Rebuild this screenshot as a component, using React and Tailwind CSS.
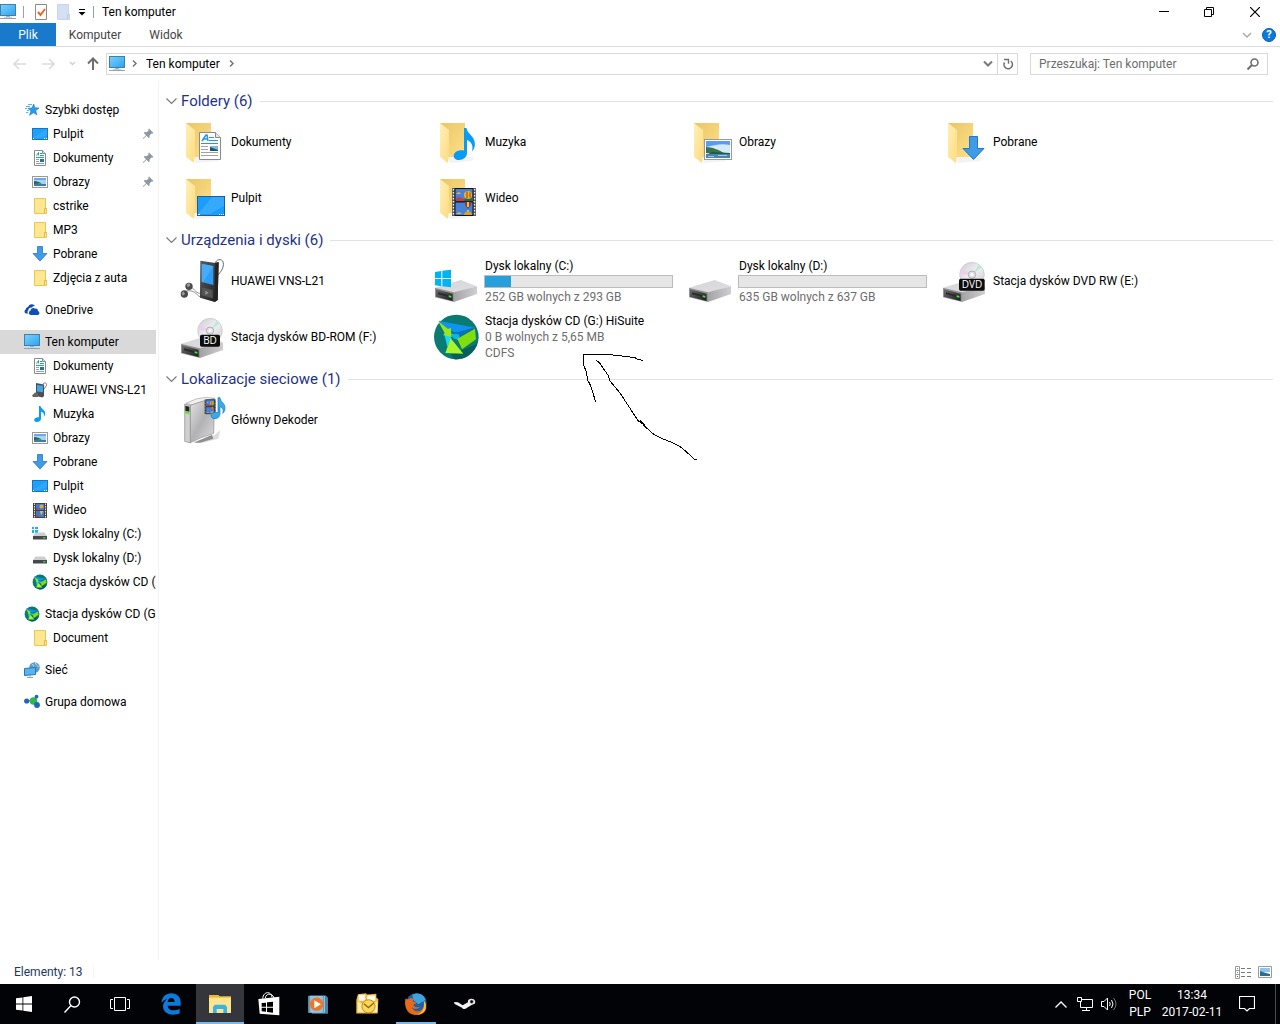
import React, { useState } from "react";

const SMALL = "h-4 w-4 shrink-0";
const LARGE = "h-12 w-12 shrink-0 overflow-visible";

/* ---------- small icons ---------- */

function PcIcon() {
  return (
    <svg viewBox="0 0 16 16" className={SMALL}>
      <defs>
        <linearGradient id="pc" x1="0" y1="0" x2="1" y2="1">
          <stop offset="0" stopColor="#79d2fb" />
          <stop offset="1" stopColor="#2da3f0" />
        </linearGradient>
      </defs>
      <rect x=".5" y=".5" width="15" height="11" fill="url(#pc)" stroke="#3f7fa8" />
      <path d="M6 12h4v1H6z" fill="#9bb3c4" />
      <path d="M4 13h8v1H4z" fill="#c3d3df" />
      <path d="M0 14h16v1H0z" fill="#8ea5b8" />
    </svg>
  );
}

function StarIcon() {
  return (
    <svg viewBox="0 0 16 16" className={SMALL}>
      <path d="M9.800 2l1 3.700 4.200.3-3.300 2.700 1.200 4.300-3.400-2.300-3.900 2.600 1.300-4.300L4 6.300l3.800-.3z" fill="#2a9ae8" stroke="#1a7fc8" strokeWidth=".6" />
      <path d="M4 2.500h4M2 4.500h4M1 6.500h2M3 8.500h2M2 10.500h2" stroke="#55b4f2" />
    </svg>
  );
}

function DesktopIcon() {
  return (
    <svg viewBox="0 0 16 16" className={SMALL}>
      <rect x=".5" y="2.500" width="15" height="11" fill="#1fa0fb" stroke="#1576bb" />
      <path d="M15 3v6L7 12H1z" fill="#3aaefe" opacity=".6" />
      <path d="M1 12.500h1M12 12.500h1M14 12.500h1" stroke="#fff" />
    </svg>
  );
}

function DocIcon() {
  return (
    <svg viewBox="0 0 16 16" className={SMALL}>
      <path d="M2.500.500h8l3 3v12h-11z" fill="#fff" stroke="#8a8a8a" />
      <path d="M10.500.500v3h3" fill="#ddd" stroke="#8a8a8a" />
      <path d="M4.500 5.500L6.500 2.500v3M8 3.500h2M8 5.500h4M4 7.500h8" fill="none" stroke="#2b95dc" />
      <path d="M4 9.500h3M4 11.500h3M4 13.500h8" stroke="#8ea4b4" />
      <path d="M8 9h4v3H8z" fill="#2d6d9d" />
    </svg>
  );
}

function PictureIcon() {
  return (
    <svg viewBox="0 0 16 16" className={SMALL}>
      <rect x=".5" y="2.500" width="15" height="11" fill="#fff" stroke="#999" />
      <path d="M2 4h12v8H2z" fill="#a6d3f8" />
      <path d="M2 4h12v2H2z" fill="#6aa9ec" />
      <path d="M2 7c3 0 5 1 8 2.500l-8 .5z" fill="#2c6349" />
      <path d="M2 10h12v2H2z" fill="#3c7ba4" />
    </svg>
  );
}

function FolderIcon() {
  return (
    <svg viewBox="0 0 16 16" className={SMALL}>
      <path d="M2.500.500h11v10h1v5h-12z" fill="#ffe693" stroke="#e9c64f" />
      <path d="M12.500 15v-4.500h2" fill="none" stroke="#e3b93c" />
    </svg>
  );
}

function DownloadIcon() {
  return (
    <svg viewBox="0 0 16 16" className={SMALL}>
      <path d="M5.500.500h5v7h4.500L8 15 1 7.500h4.500z" fill="#3d9be9" stroke="#2a78bd" strokeWidth=".8" />
    </svg>
  );
}

function CloudIcon() {
  return (
    <svg viewBox="0 0 16 16" className={SMALL}>
      <path d="M4.500 11.500H2A2.200 2.200 0 0 1 1.600 7.500 3 3 0 0 1 4 5a4 4 0 0 1 7.200-.8A3 3 0 0 0 8 5.600C5.500 5.400 4.300 7 4.400 8.500 3 9 3.500 11 4.500 11.500z" fill="#0f4fb5" />
      <path d="M7 13a2.300 2.300 0 0 1-.5-4.500 2.800 2.800 0 0 1 4.500-1.800 2.500 2.500 0 0 1 3 2.300A2.100 2.100 0 0 1 14 13z" fill="#0f4fb5" />
    </svg>
  );
}

function PlayerIcon() {
  return (
    <svg viewBox="0 0 16 16" className={SMALL}>
      <path d="M11 2c2-2 4-1 3.500 1.500L12 7" fill="none" stroke="#777" />
      <path d="M4 1l8 1.500V14l-1.500 1.500L4 14z" fill="#4b5054" />
      <path d="M5 3l6 .8v6.500L5 9.500z" fill="#3ea5ee" />
      <path d="M0 13.500l3-3 3 .5v4H1z" fill="#666" />
    </svg>
  );
}

function NoteIcon() {
  return (
    <svg viewBox="0 0 16 16" className={SMALL}>
      <path d="M7 0h1.500c.5 3 5 4 4.700 7.500-.1 1.500-.7 2.500-1.400 3.300.8-3-.6-4.500-2.800-5V13c-.2 2-2.200 3-4.300 3C3 16 2 15 2.200 13.800 2.500 12 4.800 10.800 7 11.300z" fill="#0a9bf5" />
    </svg>
  );
}

function FilmIcon() {
  return (
    <svg viewBox="0 0 16 16" className={SMALL}>
      <path d="M1 1h14v15H1z" fill="#444" />
      <path d="M2.500 1.500v14M13.500 1.500v14" stroke="#e4e4e4" strokeDasharray="1.500 1" />
      <path d="M4 2h8v6H4zM4 9h8v6H4z" fill="#3d78d4" />
      <circle cx="9.500" cy="4.500" r="2" fill="#e9a91f" />
      <path d="M8 9h3l-1 3-1 1z" fill="#e8c42a" />
      <path d="M4 6l3 1v1H4zM4 13l3 1v1H4z" fill="#c33c2d" />
    </svg>
  );
}

function SmallDriveIcon({ system }) {
  return (
    <svg viewBox="0 0 16 16" className={SMALL}>
      {system && <path d="M0 1h2v2H0zM3 1h3v2H3zM0 4h2v3H0zM3 4h3v3H3z" fill="#16b5f2" />}
      <path d="M3.500 6.500h9L15 10H1z" fill="#cfcfd1" />
      <path d="M1 10h14v3.500H1z" fill="#46494b" />
      <path d="M11 11.300h2.500v1H11z" fill="#4ee34e" />
    </svg>
  );
}

function HiSuiteArt() {
  return (
    <>
      <circle cx="67" cy="72" r="67" fill="#0b7a72" />
      <path d="M50 125l73-30 8-10a67 67 0 0 1-70 54z" fill="#07605e" />
      <path d="M13 23l111 21-50 18-38-14z" fill="#0c94f3" />
      <path d="M60 60l63-17-44 26z" fill="#0870c2" />
      <path d="M30 60l10 42 12-26-6-16z" fill="#13dcf6" />
      <path d="M50 62l24 2 6 20-22-8z" fill="#08b9e8" />
      <path d="M12 24l30 24 8-4 3 28-26-6 6-4z" fill="#9be518" />
      <path d="M123 47l3 32-42 30-14-32z" fill="#80dd0e" />
      <path d="M50 76L34 120l54 2z" fill="#aaf42c" />
    </>
  );
}

function HiSuiteIcon() {
  return (
    <svg viewBox="-5 0 144 144" className={SMALL}>
      <HiSuiteArt />
    </svg>
  );
}

function NetworkIcon() {
  return (
    <svg viewBox="0 0 16 16" className={SMALL}>
      <circle cx="10.500" cy="5.500" r="5.300" fill="#5a9dc9" />
      <path d="M8 2.500c1.500 0 2 1 1.500 2M11.500 1c0 2 2 2 3 4" fill="none" stroke="#c8e3ef" />
      <path d="M.500 6.500l11-1v7l-11 1z" fill="#53b5f4" stroke="#2e75a6" />
      <path d="M3 15.500h6M5 14h2" stroke="#8ba7ba" />
    </svg>
  );
}

function HomegroupIcon() {
  return (
    <svg viewBox="0 0 16 16" className={SMALL}>
      <path d="M3 7.500l6-1 4-3M9 8l4 4" stroke="#9bd4c4" />
      <circle cx="2.700" cy="7" r="2.600" fill="#1d66b9" />
      <circle cx="9.500" cy="7" r="3.800" fill="#2fb64d" />
      <circle cx="12.500" cy="2.700" r="1.900" fill="#1d66b9" />
      <circle cx="13" cy="11" r="2.900" fill="#1d66b9" />
    </svg>
  );
}

function PinIcon() {
  return (
    <svg viewBox="0 0 12 12" className="mr-[2px] ml-auto h-3 w-3 shrink-0">
      <path d="M7 .500L11.500 5l-1.300.7-.8-.2-1.800 2 .1 1.800-1 .7-2.200-2.200L1.200 11l-.5-.4L4 7.200 1.800 5l.8-1 2 .2 2-1.800-.3-1z" fill="#8d99a2" />
    </svg>
  );
}

/* ---------- large icons ---------- */

function FolderBase({ children }) {
  return (
    <svg viewBox="0 0 48 48" className={LARGE}>
      <defs>
        <linearGradient id="fback" x1="0" y1="0" x2="1" y2="1">
          <stop offset="0" stopColor="#e9c566" />
          <stop offset="1" stopColor="#ffe18a" />
        </linearGradient>
        <linearGradient id="fflap" x1="0" y1="0" x2="1" y2="1">
          <stop offset="0" stopColor="#fff0b8" />
          <stop offset="1" stopColor="#fddb80" />
        </linearGradient>
      </defs>
      <path d="M6 5h25v34H14z" fill="url(#fback)" />
      <path d="M14 39h26l-2 4-22 2z" fill="#e8e8e8" opacity=".5" />
      <path d="M6 5l9 7v24l-1 9-8-6z" fill="url(#fflap)" />
      {children}
    </svg>
  );
}

function DocumentsFolder() {
  return (
    <FolderBase>
      <path d="M19.500 14.500h16l5 5v22h-21z" fill="#fff" stroke="#8a8a8a" />
      <path d="M35.500 14.500v5h5" fill="#e6e6e6" stroke="#8a8a8a" />
      <path d="M22 23l4-6h1l1 6M23.500 21h4" fill="none" stroke="#2b95dc" strokeWidth="1.500" />
      <path d="M29 19.500h5M29 22.500h9M21 25.500h17" stroke="#2b95dc" />
      <path d="M21 28.500h7M21 31.500h7M21 34.500h17M21 37.500h17" stroke="#a0a4a8" />
      <path d="M30 28h8v5h-8z" fill="#7fb6e6" />
      <path d="M30 29l8 3v1h-8z" fill="#1f5560" />
    </FolderBase>
  );
}

function MusicFolder() {
  return (
    <FolderBase>
      <path d="M30 10h2.500c.5 6 8.500 8 8.400 16 0 3-1 5.500-3 7.500 1.500-5 .2-9.500-4.900-11.500v13c0 4-3.500 7-8 7-3.500 0-5.500-1.800-5.300-4.500.3-4 5.500-6.300 10.300-5z" fill="#0a9bf5" />
    </FolderBase>
  );
}

function PicturesFolder() {
  return (
    <FolderBase>
      <rect x="16.500" y="21.500" width="27" height="20" fill="#fff" stroke="#999" />
      <path d="M18 23h24v17H18z" fill="#d3eafb" />
      <path d="M18 23h24v4c-9-2-15 0-24 2z" fill="#5c9bf2" />
      <path d="M18 29c6 0 13 3 18 6H18z" fill="#3b7347" />
      <path d="M24 34l18 1v1H20z" fill="#1f5a4c" />
      <path d="M18 36h24v4H18z" fill="#4a86ac" />
      <path d="M20 38.500h6M30 37.500h9" stroke="#9fc6dc" />
    </FolderBase>
  );
}

function DownloadsFolder() {
  return (
    <FolderBase>
      <path d="M27.500 18.500h8v12h6.500L31.500 41.500 21 30.500h6.500z" fill="#3d9be9" stroke="#2a78bd" />
    </FolderBase>
  );
}

function DesktopFolder() {
  return (
    <FolderBase>
      <rect x="17.500" y="22.500" width="27" height="19" fill="#1a9dfd" stroke="#14629c" />
      <path d="M44 23v9L30 40H18l14-17z" fill="#48b2fe" opacity=".6" />
      <path d="M18 40.500h2M39 40.500h1M41 40.500h1M43 40.500h1" stroke="#fff" />
    </FolderBase>
  );
}

function FilmArt() {
  return (
    <>
      <path d="M18 14h24v28H18z" fill="#5a5a5a" />
      <path d="M19.500 15v27M40.500 15v27" stroke="#f0f0f0" strokeWidth="1.500" strokeDasharray="1.500 1.500" />
      <path d="M21 14.500h18V27H21zM21 28h18v13.500H21z" fill="#4682dc" stroke="#111" />
      <path d="M22 24l3-1 3 1 3 2v1h-9z" fill="#c43e40" />
      <path d="M31 24h8v3h-9z" fill="#236b45" />
      <circle cx="34" cy="21" r="4" fill="#eab321" />
      <path d="M33 17.500v7M36 18.500v5" stroke="#a9352a" />
      <path d="M30.500 28h7l-1 4-2.500 3-2.500-3z" fill="#8d3a3f" />
      <path d="M33 28h2v5h-2zM33 36h2v2h-2z" fill="#eec22e" />
      <path d="M30 41a4 3.500 0 0 1 8 0z" fill="#d5a51d" />
      <path d="M22 20l3-2 2 2zM22 40l3-2 3 2z" fill="#e9b534" />
    </>
  );
}

function VideoFolder() {
  return (
    <FolderBase>
      <FilmArt />
    </FolderBase>
  );
}

function DriveArt() {
  return (
    <>
      <defs>
        <linearGradient id="dtop" x1="0" y1="0" x2="1" y2="1">
          <stop offset="0" stopColor="#d5d5d8" />
          <stop offset="1" stopColor="#dfdfe2" />
        </linearGradient>
        <linearGradient id="dside" x1="0" y1="0" x2="1" y2="0">
          <stop offset="0" stopColor="#a3a3a6" />
          <stop offset="1" stopColor="#cfcfd1" />
        </linearGradient>
        <linearGradient id="dfront" x1="0" y1="0" x2="1" y2="1">
          <stop offset="0" stopColor="#6d6d6d" />
          <stop offset="1" stopColor="#1c1c1c" />
        </linearGradient>
      </defs>
      <path d="M3 92L80 69l49 19-69 19z" fill="url(#dtop)" />
      <path d="M60 106l69-18v23l-69 24z" fill="url(#dside)" />
      <path d="M3 92l57 14v29L3 121z" fill="#939396" />
      <path d="M6 97l50 13v22L6 119z" fill="url(#dfront)" />
      <path d="M12 106l34 9v6l-34-9z" fill="#2b2b2b" />
      <path d="M44 115l8 2v5l-8-2z" fill="#41ec3c" />
    </>
  );
}

function DriveIcon({ system }) {
  return (
    <svg viewBox="0 0 144 144" className={LARGE}>
      <DriveArt />
      {system && (
        <path d="M3 45l19-3v21H3zM25 41l26-3v25H25zM3 66h19v22l-19-3zM25 66h26v25l-26-3z" fill="#00b4f1" />
      )}
    </svg>
  );
}

function DiscDriveIcon({ label }) {
  const wide = label.length > 2;
  return (
    <svg viewBox="0 0 144 144" className={LARGE}>
      <defs>
        <linearGradient id="disc" x1="0" y1="0" x2="1" y2="1">
          <stop offset="0" stopColor="#c9cccd" />
          <stop offset=".5" stopColor="#f1eef3" />
          <stop offset="1" stopColor="#c6cccb" />
        </linearGradient>
      </defs>
      <DriveArt />
      <circle cx="90" cy="53" r="37" fill="url(#disc)" stroke="#c6c6c6" strokeWidth="2" />
      <path d="M90 53L54 50l4-14z" fill="#eccdf0" />
      <path d="M90 53l20-30 9 8z" fill="#b9ecd6" />
      <circle cx="90" cy="53" r="11" fill="#e2e2e2" stroke="#b0b0b0" strokeWidth="3" />
      <circle cx="90" cy="53" r="4" fill="#fff" />
      <rect x={wide ? 51 : 60} y="65" width={wide ? 77 : 60} height="36" rx="5" fill="#0c0c0c" />
      <text x="90" y="94" textAnchor="middle" fill="#fff" fontSize="30" fontFamily="Open Sans, sans-serif">
        {label}
      </text>
    </svg>
  );
}

function HiSuiteLarge() {
  return (
    <svg viewBox="0 0 144 144" className={LARGE}>
      <HiSuiteArt />
    </svg>
  );
}

function PlayerLarge() {
  return (
    <svg viewBox="60 81 144 144" className={LARGE}>
      <defs>
        <linearGradient id="pbody" x1="0" y1="0" x2="1" y2="1">
          <stop offset="0" stopColor="#5b5b5b" />
          <stop offset="1" stopColor="#1d1d1d" />
        </linearGradient>
      </defs>
      <path d="M164 108c0-18 16-24 24-15 6 12 0 28-17 45" fill="none" stroke="#6b6b6b" strokeWidth="3" />
      <path d="M80 182c20 0 22 4 32 12 6 6 10 8 16 8M95 172c8 6 14 20 30 18" fill="none" stroke="#8c8c8c" strokeWidth="3" />
      <path d="M121 92l45 7 10-3-3 114-9 6-44-13z" fill="url(#pbody)" />
      <path d="M166 99l10-3-3 114-9 6z" fill="#222" />
      <path d="M125 101l35 7v57l-35-9z" fill="#2f9df2" />
      <path d="M125 101l35 7-30 49-5-1z" fill="#62b9f7" opacity=".5" />
      <path d="M125 172l33 8v25l-33-9z" fill="#555" />
      <path d="M136 182l10 6-10 6z" fill="#999" />
      <circle cx="87" cy="169" r="11" fill="#4a4a4a" />
      <path d="M80 163l8-4 3 8-8 5z" fill="#9a9a9a" />
      <circle cx="73" cy="192" r="11" fill="#4a4a4a" />
      <path d="M64 189l7-5 4 8-7 5z" fill="#9a9a9a" />
    </svg>
  );
}

function MediaServerIcon() {
  return (
    <svg viewBox="0 0 144 144" className={LARGE}>
      <defs>
        <linearGradient id="srv" x1="0" y1="0" x2="1" y2="1">
          <stop offset="0" stopColor="#e4e4e4" />
          <stop offset=".5" stopColor="#b2b2b4" />
          <stop offset="1" stopColor="#dedede" />
        </linearGradient>
      </defs>
      <path d="M38 138l65-20 18-16-6 26-50 13z" fill="#d5d5d5" opacity=".8" />
      <path d="M42 140l54-24 4 12-40 12z" fill="#8d8f91" />
      <path d="M18 22Q50 4 80 4l24 3-68 19z" fill="#f2f2f2" stroke="#a5a5a5" strokeWidth="2" />
      <path d="M31 28q40-16 73-20l-3 104q-40 12-70 28z" fill="url(#srv)" stroke="#8c8c8e" strokeWidth="2" />
      <path d="M14 24l17 4v113l-17-5z" fill="#cfcfcf" stroke="#8c8c8e" strokeWidth="2" />
      <path d="M16 29l12 3v16l-12-3z" fill="#252525" />
      <path d="M16 44l12 3v8l-12-3z" fill="#63e02e" />
      <g transform="translate(47 -11) scale(1.450 1.550)">
        <FilmArt />
      </g>
      <path d="M114 5h6c0 12 16 16 15 32 0 7-3 12-7 15 4-11 0-16-8-20v21c0 9-7 15-15 15-8 0-12-4-12-9 1-9 11-12 21-9z" fill="#38a9ec" stroke="#1a79b8" strokeWidth="2" />
    </svg>
  );
}

/* ---------- data ---------- */

const sideItems = [
  { label: "Szybki dostęp", icon: <StarIcon /> },
  { label: "Pulpit", icon: <DesktopIcon />, child: true, pin: true },
  { label: "Dokumenty", icon: <DocIcon />, child: true, pin: true },
  { label: "Obrazy", icon: <PictureIcon />, child: true, pin: true },
  { label: "cstrike", icon: <FolderIcon />, child: true },
  { label: "MP3", icon: <FolderIcon />, child: true },
  { label: "Pobrane", icon: <DownloadIcon />, child: true },
  { label: "Zdjęcia z auta", icon: <FolderIcon />, child: true },
  { label: "OneDrive", icon: <CloudIcon /> },
  { label: "Ten komputer", icon: <PcIcon />, active: true },
  { label: "Dokumenty", icon: <DocIcon />, child: true },
  { label: "HUAWEI VNS-L21", icon: <PlayerIcon />, child: true },
  { label: "Muzyka", icon: <NoteIcon />, child: true },
  { label: "Obrazy", icon: <PictureIcon />, child: true },
  { label: "Pobrane", icon: <DownloadIcon />, child: true },
  { label: "Pulpit", icon: <DesktopIcon />, child: true },
  { label: "Wideo", icon: <FilmIcon />, child: true },
  { label: "Dysk lokalny (C:)", icon: <SmallDriveIcon system />, child: true },
  { label: "Dysk lokalny (D:)", icon: <SmallDriveIcon />, child: true },
  { label: "Stacja dysków CD (G:)", icon: <HiSuiteIcon />, child: true },
  { label: "Stacja dysków CD (G:)", icon: <HiSuiteIcon /> },
  { label: "Document", icon: <FolderIcon />, child: true },
  { label: "Sieć", icon: <NetworkIcon /> },
  { label: "Grupa domowa", icon: <HomegroupIcon /> },
];

const groups = [
  {
    title: "Foldery (6)",
    items: [
      { name: "Dokumenty", icon: <DocumentsFolder /> },
      { name: "Muzyka", icon: <MusicFolder /> },
      { name: "Obrazy", icon: <PicturesFolder /> },
      { name: "Pobrane", icon: <DownloadsFolder /> },
      { name: "Pulpit", icon: <DesktopFolder /> },
      { name: "Wideo", icon: <VideoFolder /> },
    ],
  },
  {
    title: "Urządzenia i dyski (6)",
    items: [
      { name: "HUAWEI VNS-L21", icon: <PlayerLarge /> },
      { name: "Dysk lokalny (C:)", icon: <DriveIcon system />, used: 14, lines: ["252 GB wolnych z 293 GB"] },
      { name: "Dysk lokalny (D:)", icon: <DriveIcon />, used: 0, lines: ["635 GB wolnych z 637 GB"] },
      { name: "Stacja dysków DVD RW (E:)", icon: <DiscDriveIcon label="DVD" /> },
      { name: "Stacja dysków BD-ROM (F:)", icon: <DiscDriveIcon label="BD" /> },
      { name: "Stacja dysków CD (G:) HiSuite", icon: <HiSuiteLarge />, lines: ["0 B wolnych z 5,65 MB", "CDFS"] },
    ],
  },
  {
    title: "Lokalizacje sieciowe (1)",
    items: [{ name: "Główny Dekoder", icon: <MediaServerIcon /> }],
  },
];

/* ---------- window parts ---------- */

function TitleBar() {
  return (
    <header className="flex h-[23px] items-center">
      <PcIcon />
      <span className="ml-[7px] h-3 w-px bg-gray-400" />
      <button aria-label="Właściwości" className="ml-[11px]">
        <svg viewBox="0 0 12 16" className="h-4 w-3">
          <path d="M.500.500h11v15H.500z" fill="#fff" stroke="#8b8b8b" />
          <path d="M3 8l2.500 3L10 5" fill="none" stroke="#e8652b" strokeWidth="2" />
        </svg>
      </button>
      <button aria-label="Nowy folder" className="ml-[10px]">
        <svg viewBox="0 0 13 16" className="h-4 w-[13px]">
          <path d="M.500.500h11v10h1v5H.500z" fill="#d3e0f4" stroke="#c7d5ec" />
          <path d="M10.500 15v-4.500h2" fill="none" stroke="#b9cae6" />
        </svg>
      </button>
      <button aria-label="Dostosuj pasek" className="ml-2">
        <svg viewBox="0 0 8 8" className="h-2 w-2">
          <path d="M1 1.500h6" stroke="#000" />
          <path d="M.500 4h7L4 7.500z" fill="#000" />
        </svg>
      </button>
      <span className="ml-[7px] h-3 w-px bg-gray-400" />
      <h1 className="ml-2">Ten komputer</h1>
      <div className="mr-px ml-auto flex">
        <button aria-label="Minimalizuj" className="flex h-[22px] w-[46px] items-center justify-center">
          <svg viewBox="0 0 10 10" className="h-[10px] w-[10px]"><path d="M0 4.500h10" stroke="#000" /></svg>
        </button>
        <button aria-label="Przywróć" className="flex h-[22px] w-11 items-center justify-center">
          <svg viewBox="0 0 10 10" className="h-[10px] w-[10px]">
            <path d="M.500 2.500h7v7h-7zM2.500 2.500v-2h7v7h-2" fill="none" stroke="#000" />
          </svg>
        </button>
        <button aria-label="Zamknij" className="flex h-[22px] w-12 items-center justify-center">
          <svg viewBox="0 0 10 10" className="h-[10px] w-[10px]"><path d="M0 0l10 10M10 0L0 10" stroke="#000" strokeWidth="1.200" /></svg>
        </button>
      </div>
    </header>
  );
}

function RibbonTabs() {
  return (
    <div className="flex h-6 items-stretch border-b border-[#dadbdc] text-[#444]">
      <button className="w-14 bg-[#1979ca] text-white">Plik</button>
      <button className="w-[78px]">Komputer</button>
      <button className="w-16">Widok</button>
      <div className="ml-auto flex items-center gap-[10px] pr-1">
        <button aria-label="Rozwiń wstążkę">
          <svg viewBox="0 0 10 6" className="h-[6px] w-[10px]"><path d="M1 1l4 4 4-4" fill="none" stroke="#a6a6a6" strokeWidth="1.400" /></svg>
        </button>
        <button aria-label="Pomoc" className="h-[14px] w-[14px] rounded-full border border-[#0a5eb0] bg-[#0c79dc] text-[11px] leading-3 font-bold text-white">
          ?
        </button>
      </div>
    </div>
  );
}

function AddressRow() {
  const [query, setQuery] = useState("");

  return (
    <div className="flex h-[33px] items-center pr-3">
      <button aria-label="Wstecz" className="ml-[13px]">
        <svg viewBox="0 0 13 12" className="h-3 w-[13px]"><path d="M13 6H1M6 1L1 6l5 5" fill="none" stroke="#dcdcdc" strokeWidth="1.600" /></svg>
      </button>
      <button aria-label="Dalej" className="ml-4">
        <svg viewBox="0 0 13 12" className="h-3 w-[13px]"><path d="M0 6h12M7 1l5 5-5 5" fill="none" stroke="#dcdcdc" strokeWidth="1.600" /></svg>
      </button>
      <button aria-label="Ostatnie lokalizacje" className="ml-[14px]">
        <svg viewBox="0 0 7 5" className="h-[5px] w-[7px]"><path d="M1 1l2.500 2.500L6 1" fill="none" stroke="#d0d0d0" strokeWidth="1.400" /></svg>
      </button>
      <button aria-label="W górę" className="ml-[11px]">
        <svg viewBox="0 0 12 13" className="h-[13px] w-3"><path d="M6 13V2M1 6.500l5-5 5 5" fill="none" stroke="#6f6f6f" strokeWidth="2" /></svg>
      </button>
      <div className="ml-[7px] flex h-[22px] flex-1 items-center border border-[#d9d9d9] pl-[2px]">
        <PcIcon />
        <svg viewBox="0 0 5 7" className="ml-[7px] h-[7px] w-[5px]"><path d="M1 .500l3 3-3 3" fill="none" stroke="#6f6f6f" strokeWidth="1.400" /></svg>
        <button className="ml-[9px]">Ten komputer</button>
        <svg viewBox="0 0 5 7" className="ml-[9px] h-[7px] w-[5px]"><path d="M1 .500l3 3-3 3" fill="none" stroke="#6f6f6f" strokeWidth="1.400" /></svg>
        <button aria-label="Poprzednie lokalizacje" className="mr-[4px] ml-auto">
          <svg viewBox="0 0 10 7" className="h-[7px] w-[10px]"><path d="M1 1.500l4 4 4-4" fill="none" stroke="#7a7a7a" strokeWidth="2" /></svg>
        </button>
        <button aria-label="Odśwież" className="flex h-full w-5 items-center justify-center border-l border-[#d9d9d9]">
          <svg viewBox="0 0 12 12" className="h-3 w-3">
            <path d="M2.500 4.500A4.200 4.200 0 1 0 8.800 3.200" fill="none" stroke="#6f6f6f" strokeWidth="1.600" />
            <path d="M2 1.500h4.500v4.300" fill="none" stroke="#6f6f6f" strokeWidth="1.400" />
          </svg>
        </button>
      </div>
      <label className="ml-3 flex h-[22px] w-[238px] items-center border border-[#d9d9d9] pr-2 pl-2">
        <input
          type="text"
          aria-label="Przeszukaj"
          value={query}
          onChange={(e) => setQuery(e.target.value)}
          placeholder="Przeszukaj: Ten komputer"
          className="min-w-0 flex-1 outline-none placeholder:text-[#6d6d6d]"
        />
        <svg viewBox="0 0 12 12" className="h-3 w-3">
          <circle cx="7.500" cy="4.500" r="3.500" fill="none" stroke="#6f6f6f" strokeWidth="1.600" />
          <path d="M5 7l-4.500 4.500" stroke="#6f6f6f" strokeWidth="2" />
        </svg>
      </label>
    </div>
  );
}

function Sidebar() {
  return (
    <nav className="w-[159px] shrink-0 border-r border-[#f3f3f3] pt-[18px] pr-[2px]">
      {sideItems.map((item, i) => (
        <a
          key={i}
          href="#"
          className={`flex h-6 items-center gap-[5px] overflow-hidden whitespace-nowrap ${item.child ? "pl-8" : "pl-6"} ${
            !item.child && i > 0 ? "mt-2" : ""
          } ${item.active ? "bg-[#d9d9d9]" : ""}`}
        >
          {item.icon}
          <span>{item.label}</span>
          {item.pin && <PinIcon />}
        </a>
      ))}
    </nav>
  );
}

function Tile({ item }) {
  return (
    <a href="#" className="flex h-14 w-[254px] items-center gap-[2px]">
      {item.icon}
      <div className="leading-4">
        <div className="pl-px">{item.name}</div>
        {item.used !== undefined && (
          <div className="my-px h-[13px] w-[189px] border border-[#bcbcbc] bg-[#e6e6e6]">
            <div className="h-full bg-[#26a0da]" style={{ width: `${item.used}%` }} />
          </div>
        )}
        {item.lines?.map((line) => (
          <div key={line} className="pl-px text-[#6d6d6d]">{line}</div>
        ))}
      </div>
    </a>
  );
}

function Group({ group }) {
  return (
    <section>
      <div className="flex h-[27px] items-center pt-px pr-[7px]">
        <button aria-label="Zwiń grupę" className="mr-[4px]">
          <svg viewBox="0 0 11 7" className="h-[7px] w-[11px]"><path d="M.500 .500l5 5 5-5" fill="none" stroke="#7a7a7a" strokeWidth="1.200" /></svg>
        </button>
        <h2 className="text-[15px] leading-5 text-[#1e3287]">{group.title}</h2>
        <span className="ml-[7px] h-px flex-1 bg-[#e2e2e2]" />
      </div>
      <div className="flex flex-wrap pl-[14px]">
        {group.items.map((item) => (
          <Tile key={item.name} item={item} />
        ))}
      </div>
    </section>
  );
}

function PenArrow() {
  return (
    <svg viewBox="465 360 360 345" className="pointer-events-none absolute top-[270px] left-[421px] h-[115px] w-[120px]">
      <g fill="none" stroke="#000" strokeWidth="3" shapeRendering="crispEdges">
        <path d="M654 391l-14-2-10-6-40-5-45-5h-70v30l9 22 4 25 8 15 16 50" />
        <path d="M514 391l10 8 26 38 4 15 31 37 30 46 25 38 18 12-12-13 12 16 27 24 30 15 30 12 25 14 40 36h6" />
      </g>
    </svg>
  );
}

function StatusBar() {
  return (
    <footer className="flex h-6 items-center pr-2 pl-[14px] text-[#1e395b]">
      <span>Elementy: 13</span>
      <span className="ml-[10px] h-3 w-px bg-gray-100" />
      <button aria-label="Szczegóły" className="ml-auto">
        <svg viewBox="0 0 16 13" className="h-[13px] w-4">
          <path d="M.500.500h4v12h-4zM.500 4.500h4M.500 8.500h4" fill="none" stroke="#999" />
          <path d="M6 2.500h4M12 2.500h4M6 6.500h4M12 6.500h4M6 10.500h4M12 10.500h4" stroke="#777" />
          <path d="M2 2h1v1H2zM2 6h1v1H2z" fill="#4b8fe0" />
          <path d="M2 10h1v1H2z" fill="#c33" />
        </svg>
      </button>
      <button aria-label="Duże ikony" className="ml-[7px]">
        <svg viewBox="0 0 14 12" className="h-3 w-[14px]">
          <path d="M.500.500h13v11H.500z" fill="#fff" stroke="#999" />
          <path d="M2 2h10v4H2z" fill="#8fc3f3" />
          <path d="M2 5l6 2 4 1v2H2z" fill="#2f6d8e" />
        </svg>
      </button>
    </footer>
  );
}

/* ---------- taskbar ---------- */

const apps = [
  {
    name: "Edge",
    icon: (
      <svg viewBox="0 0 60 66" className="h-[22px] w-5">
        <path d="M1 30C3 12 14 1 31 1c18 0 28 12 28 28v9H20c1 10 9 14 18 14 7 0 13-2 18-5v14c-6 3-13 4-20 4C18 65 6 55 6 40c0-9 5-17 13-22-10 3-15 8-18 12zM20 27h21c0-7-4-12-10-12S21 20 20 27z" fill="#0c7adb" fillRule="evenodd" />
      </svg>
    ),
  },
  {
    name: "Eksplorator plików",
    state: "active",
    icon: (
      <svg viewBox="0 0 66 54" className="h-[18px] w-[22px]">
        <path d="M0 0h28l4 4h34v50H0z" fill="#e8b93e" />
        <path d="M3 8h63v46H0V8z" fill="#fde48e" />
        <path d="M12 54V36l6-7h30l6 7v18H43V42H23v12z" fill="#38b3e6" />
      </svg>
    ),
  },
  {
    name: "Sklep",
    icon: (
      <svg viewBox="0 0 66 72" className="h-6 w-[22px]">
        <path d="M14 20C15 8 22 2 29 2s12 5 13 14M22 18c1-9 8-13 15-11 8 2 10 7 11 11" fill="none" stroke="#fff" strokeWidth="3" />
        <path d="M1 21l63-7v56L5 65z" fill="#fff" />
        <path d="M11 33l13-1v12H11zM27 31l18-2v15H27zM11 47h13v12l-13-1zM27 47h18v15l-18-2z" fill="#000" />
      </svg>
    ),
  },
  {
    name: "Odtwarzacz filmów",
    icon: (
      <svg viewBox="0 0 60 56" className="h-[19px] w-5">
        <path d="M6 1h48l6 6v49H12z" fill="#4a7fa3" />
        <path d="M1 2h50v51H1z" fill="#8fc4e4" />
        <path d="M5 2v51M46 2v51" stroke="#5d93b5" strokeWidth="3" />
        <circle cx="26" cy="27" r="20" fill="#ef7622" />
        <path d="M19 15l20 12-20 12z" fill="#fff" />
      </svg>
    ),
  },
  {
    name: "Outlook",
    icon: (
      <svg viewBox="0 0 70 66" className="h-[22px] w-[23px]">
        <path d="M6 3l24-3 4 4 28-2v12l6 4-2 44H1V20z" fill="#f0b93f" />
        <path d="M8 5h20v18H8zM34 7h25v16H34z" fill="#fffaf0" />
        <path d="M5 24l30 20 30-20v34H5z" fill="#fdebab" />
        <circle cx="38" cy="40" r="20" fill="#f9d65c" stroke="#c98d14" strokeWidth="3" />
        <path d="M24 32l14 12 16-14" fill="none" stroke="#9a680e" strokeWidth="4" />
      </svg>
    ),
  },
  {
    name: "Firefox",
    state: "open",
    icon: (
      <svg viewBox="0 0 66 66" className="h-[22px] w-[22px]">
        <circle cx="34" cy="32" r="31" fill="#1d62a5" />
        <path d="M22 6c12-9 34-5 40 14L40 34 26 22z" fill="#3ea4dc" />
        <path d="M2 16l6 4c6-5 14-6 20-2-5 2-6 7-1 9l7 1c0 5-8 5-9 9 4 6 12 8 20 4-5 8-18 9-24 1 2 12 18 17 29 8 9-7 10-19 6-28 14 16 11 44-22 44C4 66-4 36 2 16z" fill="#e66a1b" />
        <path d="M56 22c14 16 6 43-20 43 14-4 24-16 20-43z" fill="#fdbf2d" />
      </svg>
    ),
  },
  {
    name: "Steam",
    icon: (
      <svg viewBox="0 0 66 36" className="h-3 w-[22px]">
        <path d="M0 12l12 1 14 9 16-9a11 9 0 1 1 12 7L38 30c-4 5-12 4-14-1L2 18z" fill="#f2f2f2" />
        <circle cx="53" cy="11" r="5" fill="#000" stroke="#999" strokeWidth="2" />
      </svg>
    ),
  },
];

function Taskbar() {
  return (
    <div className="flex h-10 items-stretch bg-[#010307] text-white">
      <button aria-label="Start" className="flex w-12 items-center justify-center">
        <svg viewBox="0 0 16 16" className="h-4 w-4">
          <path d="M0 2.300L6.500 1.400v6.200H0zM7.300 1.300L16 0v7.600H7.300zM0 8.400h6.500v6.200L0 13.700zM7.300 8.400H16V16l-8.700-1.300z" fill="#fff" />
        </svg>
      </button>
      <button aria-label="Szukaj" className="flex w-12 items-center justify-center">
        <svg viewBox="0 0 17 17" className="h-[17px] w-[17px]">
          <circle cx="10.500" cy="6" r="5" fill="none" stroke="#fff" strokeWidth="1.400" />
          <path d="M7 9.500l-6.500 7" stroke="#fff" strokeWidth="1.400" />
        </svg>
      </button>
      <button aria-label="Widok zadań" className="mr-[3px] flex w-12 items-center justify-center">
        <svg viewBox="0 0 20 15" className="h-[15px] w-5">
          <path d="M4.500.500h11v13h-11zM3 2.500H.500v9H3M17 2.500h2.500v9H17" fill="none" stroke="#fff" />
        </svg>
      </button>
      <div className="flex gap-px">
        {apps.map((app) => (
          <button
            key={app.name}
            aria-label={app.name}
            className={`flex w-12 flex-col items-center ${app.state === "active" ? "bg-[#35363b]" : ""}`}
          >
            <span className="flex flex-1 items-center pt-[2px]">{app.icon}</span>
            <span
              className={`h-[2px] ${app.state === "active" ? "w-full bg-[#76b9ed]" : ""} ${
                app.state === "open" ? "w-10 bg-[#76b9ed]" : ""
              }`}
            />
          </button>
        ))}
      </div>
      <div className="ml-auto flex items-center">
        <button aria-label="Pokaż ukryte ikony">
          <svg viewBox="0 0 12 7" className="h-[7px] w-3"><path d="M.500 6.500L6 1l5.500 5.500" fill="none" stroke="#fff" strokeWidth="1.300" /></svg>
        </button>
        <button aria-label="Sieć" className="ml-[10px]">
          <svg viewBox="0 0 16 14" className="h-[14px] w-4">
            <path d="M5 2.500h10.500v8H3.500V5M.500.500h4v4h-4zM9.500 11v2M5 13.500h8" fill="none" stroke="#fff" />
          </svg>
        </button>
        <button aria-label="Głośność" className="ml-2">
          <svg viewBox="0 0 17 14" className="h-[14px] w-[17px]">
            <path d="M.500 4.500H3L6.500 1v12L3 9.500H.500z" fill="none" stroke="#fff" />
            <path d="M8.500 5q1.500 2 0 4M10.500 3q3 4 0 8" fill="none" stroke="#fff" />
            <path d="M12.500 1q5 6 0 12" fill="none" stroke="#777" />
          </svg>
        </button>
        <button aria-label="Język" className="ml-[10px] w-6 text-center leading-[17px]">
          POL
          <br />
          PLP
        </button>
        <button aria-label="Zegar" className="ml-2 w-16 text-center leading-[17px]">
          13:34
          <br />
          2017-02-11
        </button>
        <button aria-label="Centrum akcji" className="ml-[15px]">
          <svg viewBox="0 0 16 16" className="h-4 w-4"><path d="M.500.500h15v12h-5L8 15l-2.500-2.500h-5z" fill="none" stroke="#fff" strokeWidth="1.200" /></svg>
        </button>
        <button aria-label="Pokaż pulpit" className="ml-5 h-10 w-[5px] border-l border-[#4a4c50]" />
      </div>
    </div>
  );
}

export default function App() {
  return (
    <div className="flex min-h-screen flex-col bg-white font-['Roboto','Open_Sans',sans-serif] text-[12px] leading-4 text-black">
      <TitleBar />
      <RibbonTabs />
      <AddressRow />
      <div className="flex flex-1">
        <Sidebar />
        <main className="relative min-w-0 flex-1 pt-[7px] pl-[7px]">
          {groups.map((group) => (
            <Group key={group.title} group={group} />
          ))}
          <PenArrow />
        </main>
      </div>
      <StatusBar />
      <Taskbar />
    </div>
  );
}
